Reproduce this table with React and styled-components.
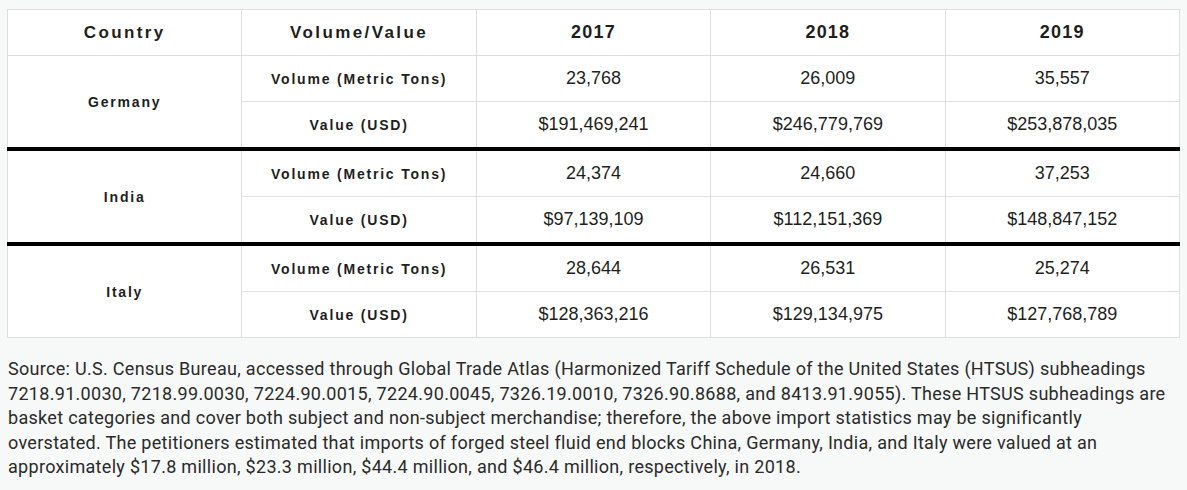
import React from 'react';
import styled, { createGlobalStyle } from 'styled-components';

//________ Data ________
const years = ['2017', '2018', '2019'];

const groups = [
  {
    country: 'Germany',
    rows: [
      { label: 'Volume (Metric Tons)', values: ['23,768', '26,009', '35,557'] },
      { label: 'Value (USD)', values: ['$191,469,241', '$246,779,769', '$253,878,035'] },
    ],
  },
  {
    country: 'India',
    rows: [
      { label: 'Volume (Metric Tons)', values: ['24,374', '24,660', '37,253'] },
      { label: 'Value (USD)', values: ['$97,139,109', '$112,151,369', '$148,847,152'] },
    ],
  },
  {
    country: 'Italy',
    rows: [
      { label: 'Volume (Metric Tons)', values: ['28,644', '26,531', '25,274'] },
      { label: 'Value (USD)', values: ['$128,363,216', '$129,134,975', '$127,768,789'] },
    ],
  },
];

const sourceLines = [
  'Source: U.S. Census Bureau, accessed through Global Trade Atlas (Harmonized Tariff Schedule of the United States (HTSUS) subheadings',
  '7218.91.0030, 7218.99.0030, 7224.90.0015, 7224.90.0045, 7326.19.0010, 7326.90.8688, and 8413.91.9055). These HTSUS subheadings are',
  'basket categories and cover both subject and non-subject merchandise; therefore, the above import statistics may be significantly',
  'overstated. The petitioners estimated that imports of forged steel fluid end blocks China, Germany, India, and Italy were valued at an',
  'approximately $17.8 million, $23.3 million, $44.4 million, and $46.4 million, respectively, in 2018.',
];

////////////////////////////////////////////////////////////////////////////////////

const App = () => {
  return (
    <>
      <GlobalStyle />
      <StyledPage>
        <StyledTable>
          <thead>
            <tr>
              <HeadCell>Country</HeadCell>
              <HeadCell>Volume/Value</HeadCell>
              {years.map((y) => (
                <HeadCell key={y} $year>
                  {y}
                </HeadCell>
              ))}
            </tr>
          </thead>
          {groups.map((g, gi) => (
            <Group key={g.country} $first={gi === 0}>
              {g.rows.map((r, ri) => (
                <tr key={r.label}>
                  {ri === 0 && <LabelCell rowSpan={2}>{g.country}</LabelCell>}
                  <LabelCell>{r.label}</LabelCell>
                  {r.values.map((v, vi) => (
                    <ValueCell key={vi}>{v}</ValueCell>
                  ))}
                </tr>
              ))}
            </Group>
          ))}
        </StyledTable>
        <Caption>
          {sourceLines.map((line, i) => (
            <span key={i}>{line}</span>
          ))}
        </Caption>
      </StyledPage>
    </>
  );
};

/////////////////////////// styled components /////////////////////////////////////

const GlobalStyle = createGlobalStyle`
  html, body {
    margin: 0;
    background: #f7f8f8;
  }
`;

const StyledPage = styled.div`
  padding: 9px 7px 0 7px;
  width: 1173px;
`;

const StyledTable = styled.table`
  width: 1173px;
  border-collapse: collapse;
  table-layout: fixed;
  background: #fff;
  color: #1e1e1e;
  border: 1px solid #dedede;
`;

const Group = styled.tbody`
  border-top: ${({ $first }) => ($first ? '1px solid #dedede' : '4px solid #000')};
`;

const HeadCell = styled.th`
  height: 45px;
  padding: 0;
  border: 1px solid #dedede;
  font-family: 'Liberation Sans', Arial, sans-serif;
  font-weight: 700;
  font-size: ${({ $year }) => ($year ? '18px' : '17px')};
  letter-spacing: ${({ $year }) => ($year ? '1.2px' : '2.4px')};
  text-align: center;
  color: #1e1e1e;
`;

const LabelCell = styled.td`
  height: 45px;
  padding: 0;
  border: 1px solid #dedede;
  font-family: 'Liberation Sans', Arial, sans-serif;
  font-weight: 700;
  font-size: 14px;
  letter-spacing: 1.8px;
  text-align: center;
  color: #1e1e1e;
`;

const ValueCell = styled.td`
  height: 45px;
  padding: 0;
  border: 1px solid #dedede;
  font-family: 'Liberation Sans', Arial, sans-serif;
  font-size: 18px;
  text-align: center;
  color: #1e1e1e;
`;

const Caption = styled.p`
  margin: 19px 0 0 1px;
  display: flex;
  flex-direction: column;
  font-family: Roboto, 'Noto Sans', sans-serif;
  font-size: 18px;
  letter-spacing: 0.3px;
  line-height: 24.5px;
  color: #2a2a2a;
  white-space: nowrap;
`;

export default App;
